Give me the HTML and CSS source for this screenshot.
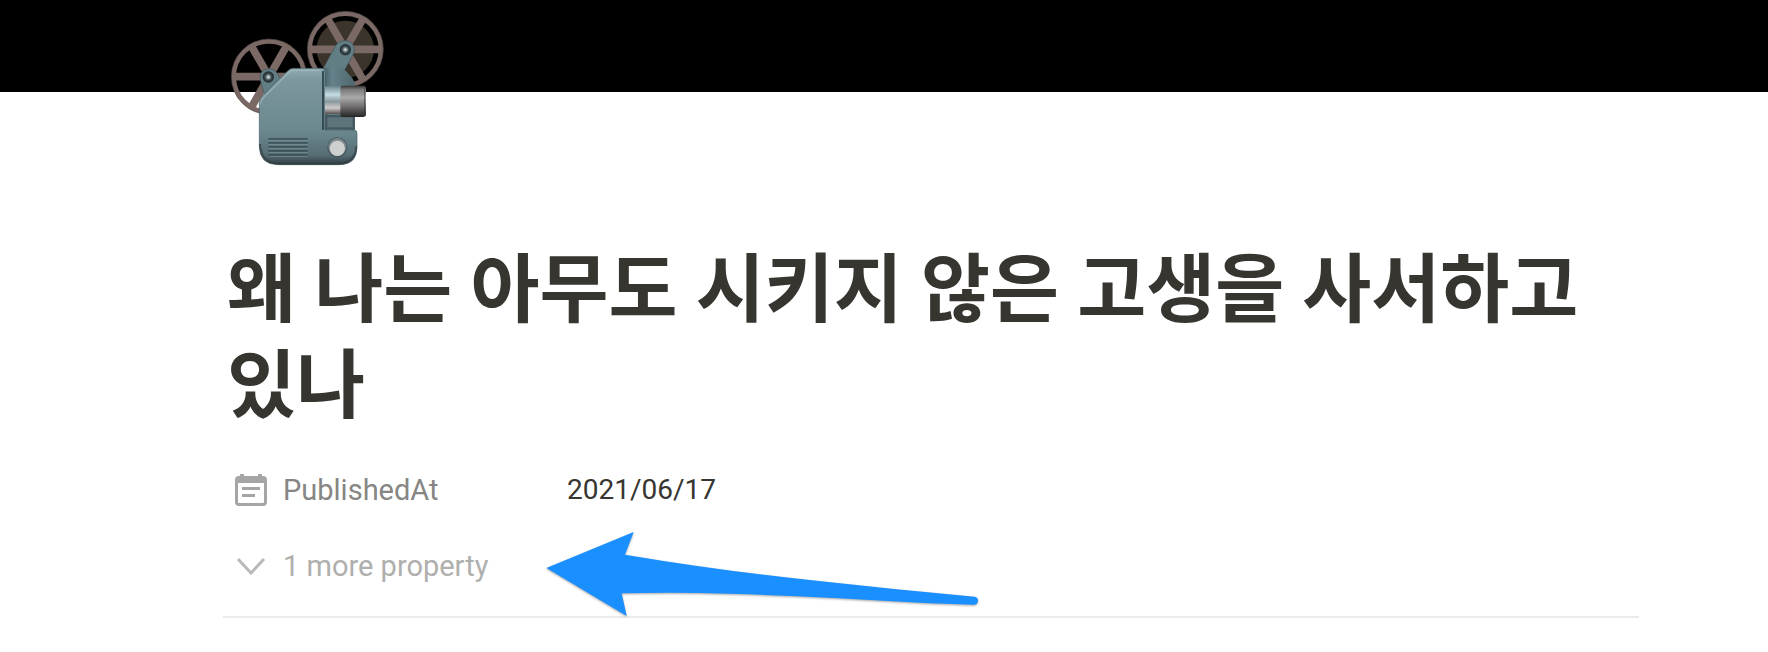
FILE: index.html
```html
<!DOCTYPE html>
<html lang="ko">
<head>
  <meta charset="UTF-8">
  <meta name="viewport" content="width=device-width, initial-scale=1">
  <title>왜 나는 아무도 시키지 않은 고생을 사서하고 있나</title>
  <link rel="stylesheet" href="styles.css">
</head>
<body>

  <!-- Cover -->
  <header class="cover"></header>

  <main class="page">
    <!-- Page icon: film projector -->
    <svg class="page-icon" viewBox="24 24 480 480" role="img" aria-label="Film projector">
      <defs>
        <linearGradient id="body" x1="0" y1="0" x2="0" y2="1">
          <stop offset="0" stop-color="#91acb3"/>
          <stop offset="0.12" stop-color="#7c979e"/>
          <stop offset="0.65" stop-color="#6c888f"/>
          <stop offset="0.9" stop-color="#566d74"/>
          <stop offset="1" stop-color="#303e43"/>
        </linearGradient>
        <linearGradient id="side" x1="0" y1="0" x2="1" y2="0">
          <stop offset="0" stop-color="#415960"/>
          <stop offset="0.3" stop-color="#65818a"/>
          <stop offset="1" stop-color="#50686f"/>
        </linearGradient>
        <linearGradient id="glass" x1="0" y1="0" x2="0" y2="1">
          <stop offset="0" stop-color="#708992"/>
          <stop offset="0.3" stop-color="#c6dce3"/>
          <stop offset="0.55" stop-color="#88989e"/>
          <stop offset="0.78" stop-color="#d0c9c9"/>
          <stop offset="1" stop-color="#554d4e"/>
        </linearGradient>
        <linearGradient id="barrel" x1="0" y1="0" x2="0" y2="1">
          <stop offset="0" stop-color="#343434"/>
          <stop offset="0.12" stop-color="#797979"/>
          <stop offset="0.38" stop-color="#aaaaaa"/>
          <stop offset="0.65" stop-color="#737171"/>
          <stop offset="1" stop-color="#262525"/>
        </linearGradient>
        <radialGradient id="hub">
          <stop offset="0" stop-color="#f0f2f2"/>
          <stop offset="0.3" stop-color="#8b979b"/>
          <stop offset="0.6" stop-color="#37464c"/>
          <stop offset="1" stop-color="#20292c"/>
        </radialGradient>
      </defs>

      <!-- Reels -->
      <g fill="none" stroke="#7a6964">
        <circle cx="376" cy="148" r="86" fill="#3b342b" stroke="none"/>
        <circle cx="376" cy="148" r="107" stroke-width="14"/>
        <path d="M269 148H483M322 55l108 186M430 55L322 241" stroke-width="23"/>
        <circle cx="376" cy="148" r="114" stroke="#49403d" stroke-width="2"/>
        <circle cx="147" cy="230" r="106" stroke-width="14"/>
        <path d="M41 230H253M94 138l106 184M200 138L94 322" stroke-width="23"/>
        <circle cx="147" cy="230" r="113" stroke="#49403d" stroke-width="2"/>
      </g>

      <!-- Arms -->
      <path d="M310 205L346 138Q356 122 376 122Q402 124 403 149Q402 162 394 174L365 225Z" fill="#617e84" stroke="#405158" stroke-width="2"/>
      <path d="M133 284L122 244Q115 218 134 209Q157 201 170 218L186 242Z" fill="#617e84" stroke="#405158" stroke-width="2"/>

      <!-- Body -->
      <path d="M306 205H363Q372 206 378 213L397 235Q405 246 405 257V400H306Z" fill="url(#side)"/>
      <path d="M218 205H306Q315 207 315 216V390H403Q411 391 411 399V441Q411 494 358 494H175Q118 494 118 438V310Q118 294 130 284L203 213Q210 206 218 205Z" fill="url(#body)" stroke="#465c63" stroke-width="2"/>
      <path d="M121 313Q122 300 132 291L207 217Q213 211 221 211H299" fill="none" stroke="#a6bdc2" stroke-width="4" opacity=".65"/>
      <path d="M309 213V390" stroke="#354c54" stroke-width="6"/>
      <path d="M120 432Q123 491 177 491H357Q405 490 409 439" fill="none" stroke="#303d42" stroke-width="6" opacity=".7"/>
      <path d="M316 345H404V388H316Z" fill="#43575e"/>
      <path d="M322 352H398V382H322Z" fill="#5d747b"/>

      <!-- Lens -->
      <path d="M315 259H367V342H315Z" fill="url(#glass)"/>
      <path d="M367 257H432Q438 258 438 265V344Q438 350 430 351H367Q361 350 361 343V265Q361 258 367 257Z" fill="url(#barrel)"/>
      <path d="M434 264V344" stroke="#303030" stroke-width="3" opacity=".6"/>

      <!-- Vents and knob -->
      <path d="M145 417H263M145 429H263M145 441H263M145 453H263M145 465H263" stroke="#344951" stroke-width="4"/>
      <path d="M147 421H263M147 433H263M147 445H263M147 457H263M147 469H263" stroke="#81979c" stroke-width="2"/>
      <circle cx="352" cy="442" r="30" fill="#48575c"/>
      <circle cx="352" cy="441" r="27" fill="#7d898c"/>
      <circle cx="352" cy="445" r="23" fill="#cecfcf"/>
      <circle cx="376" cy="149" r="17" fill="url(#hub)"/>
      <circle cx="145" cy="231" r="17" fill="url(#hub)"/>
    </svg>

    <h1 class="title">왜 나는 아무도 시키지 않은 고생을 사서하고 있나</h1>

    <!-- Properties -->
    <section class="properties">
      <dl class="property">
        <dt>
          <svg class="icon" viewBox="0 0 32 32" aria-hidden="true">
            <path fill="#a5a5a4" fill-rule="evenodd" d="M5 0h4v2h14V0h4v2h1q4 0 4 4v22q0 4-4 4H4q-4 0-4-4V6q0-4 4-4h1zM3 9v19q0 1 1 1h24q1 0 1-1V9zM7 13h18v3H7zM7 20h13v3H7z"/>
          </svg>
          PublishedAt
        </dt>
        <dd>2021/06/17</dd>
      </dl>
      <button class="more" type="button">
        <svg class="icon" viewBox="0 0 32 32" aria-hidden="true">
          <path d="M3 9l13 14L29 9" fill="none" stroke="#b9b9b8" stroke-width="3"/>
        </svg>
        1 more property
      </button>

      <!-- Arrow pointing at the toggle -->
      <svg class="arrow" viewBox="40 205 1320 276" aria-hidden="true">
        <path fill="#1a8fff" d="M50 325L312 217L286 285Q560 331 840 361Q1090 389 1335 411Q1345 413 1345 423Q1344 435 1332 435L1200 431Q860 410 600 402Q430 397 276 401L291 469Z"/>
      </svg>
    </section>
  </main>

</body>
</html>
```
FILE: styles.css
```css
body {
  margin: 0;
  background: #fff;
  color: #373530;
  font-family: Roboto, "Noto Sans CJK KR", sans-serif;
  font-size: 29px;
  line-height: 36px;
}
.cover {
  height: 92px;
  background: #000;
}
.page {
  padding: 0 129px 0 223px;
}
.page-icon {
  display: block;
  width: 160px;
  height: 160px;
  margin: -84px 0 0 5px;
}
.title {
  margin: 71px 0 21px;
  padding-left: 4px;
  font-family: Lato, "Noto Sans CJK KR", sans-serif;
  font-size: 75px;
  font-weight: 700;
  line-height: 96px;
  word-break: keep-all;
}
.properties {
  position: relative;
  padding-bottom: 12px;
  border-bottom: 2px solid #ebebeb;
}
.property {
  display: flex;
  align-items: center;
  height: 76px;
  margin: 0;
}
.property dt {
  display: flex;
  align-items: center;
  gap: 16px;
  width: 332px;
  padding-left: 12px;
  color: #868684;
}
.property dd {
  margin: 0;
  font-size: 28px;
}
.icon {
  flex: none;
  width: 32px;
  height: 32px;
}
.more {
  display: flex;
  align-items: center;
  gap: 16px;
  height: 76px;
  padding: 0 12px;
  border: 0;
  background: none;
  color: #afafad;
  font: inherit;
  cursor: pointer;
}
.arrow {
  position: absolute;
  top: 76px;
  left: 320px;
  width: 440px;
  height: 92px;
  overflow: visible;
  filter: drop-shadow(0 1px 1px rgba(0, 0, 0, 0.35));
  pointer-events: none;
}
```
